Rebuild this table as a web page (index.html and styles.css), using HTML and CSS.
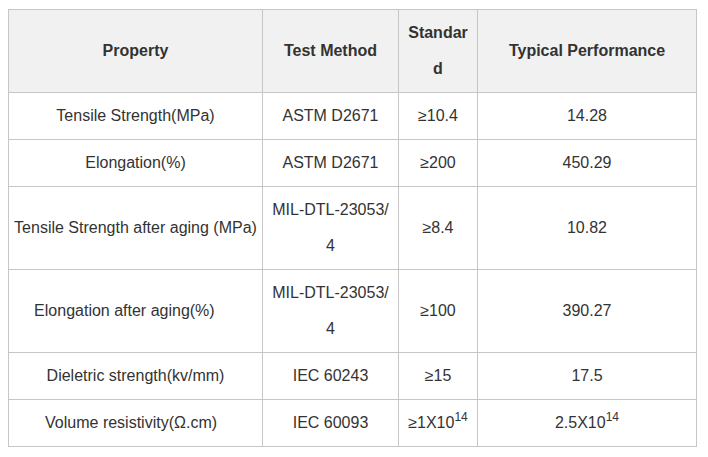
FILE: index.html
```html
<!DOCTYPE html>
<html>
<head>
<meta charset="utf-8">
<link rel="stylesheet" href="styles.css">
</head>
<body>
<table class="spec">
  <colgroup>
    <col class="c1"><col class="c2"><col class="c3"><col class="c4">
  </colgroup>
  <thead>
    <tr>
      <th>Property</th>
      <th>Test Method</th>
      <th class="narrow">Standard</th>
      <th>Typical Performance</th>
    </tr>
  </thead>
  <tbody>
    <tr><td>Tensile Strength(MPa)</td><td>ASTM D2671</td><td>≥10.4</td><td>14.28</td></tr>
    <tr><td>Elongation(%)</td><td>ASTM D2671</td><td>≥200</td><td>450.29</td></tr>
    <tr><td>Tensile Strength after aging (MPa)</td><td class="wrap">MIL-DTL-23053/4</td><td>≥8.4</td><td>10.82</td></tr>
    <tr><td>Elongation after aging(%)&nbsp;&nbsp;&nbsp;&nbsp;&nbsp;</td><td class="wrap">MIL-DTL-23053/4</td><td>≥100</td><td>390.27</td></tr>
    <tr><td>Dieletric strength(kv/mm)</td><td>IEC 60243</td><td>≥15</td><td>17.5</td></tr>
    <tr><td>Volume resistivity(Ω.cm)&nbsp;&nbsp;</td><td>IEC 60093</td><td>≥1X10<sup>14</sup></td><td>2.5X10<sup>14</sup></td></tr>
  </tbody>
</table>
</body>
</html>
```
FILE: styles.css
```css
body {
  margin: 9px 8px;
  background: #ffffff;
  font-family: "Liberation Sans", Arial, sans-serif;
  font-size: 16px;
  color: #333333;
}
.spec {
  border-collapse: collapse;
  table-layout: fixed;
  width: 689px;
}
.c1 { width: 254px; }
.c2 { width: 136px; }
.c3 { width: 79px; }
.c4 { width: 219px; }
.spec th,
.spec td {
  border: 1px solid #c6c6c6;
  padding: 5px 4px;
  line-height: 36px;
  text-align: center;
  vertical-align: middle;
}
.spec th {
  background: #f1f1f1;
  font-weight: bold;
}
.spec th.narrow {
  padding: 5px 8px;
  overflow-wrap: anywhere;
  word-break: break-all;
}
.spec td.wrap {
  padding: 5px 8px;
  overflow-wrap: anywhere;
  word-break: break-all;
}
.spec sup {
  font-size: 12px;
  line-height: 0;
  vertical-align: 7px;
}
```
